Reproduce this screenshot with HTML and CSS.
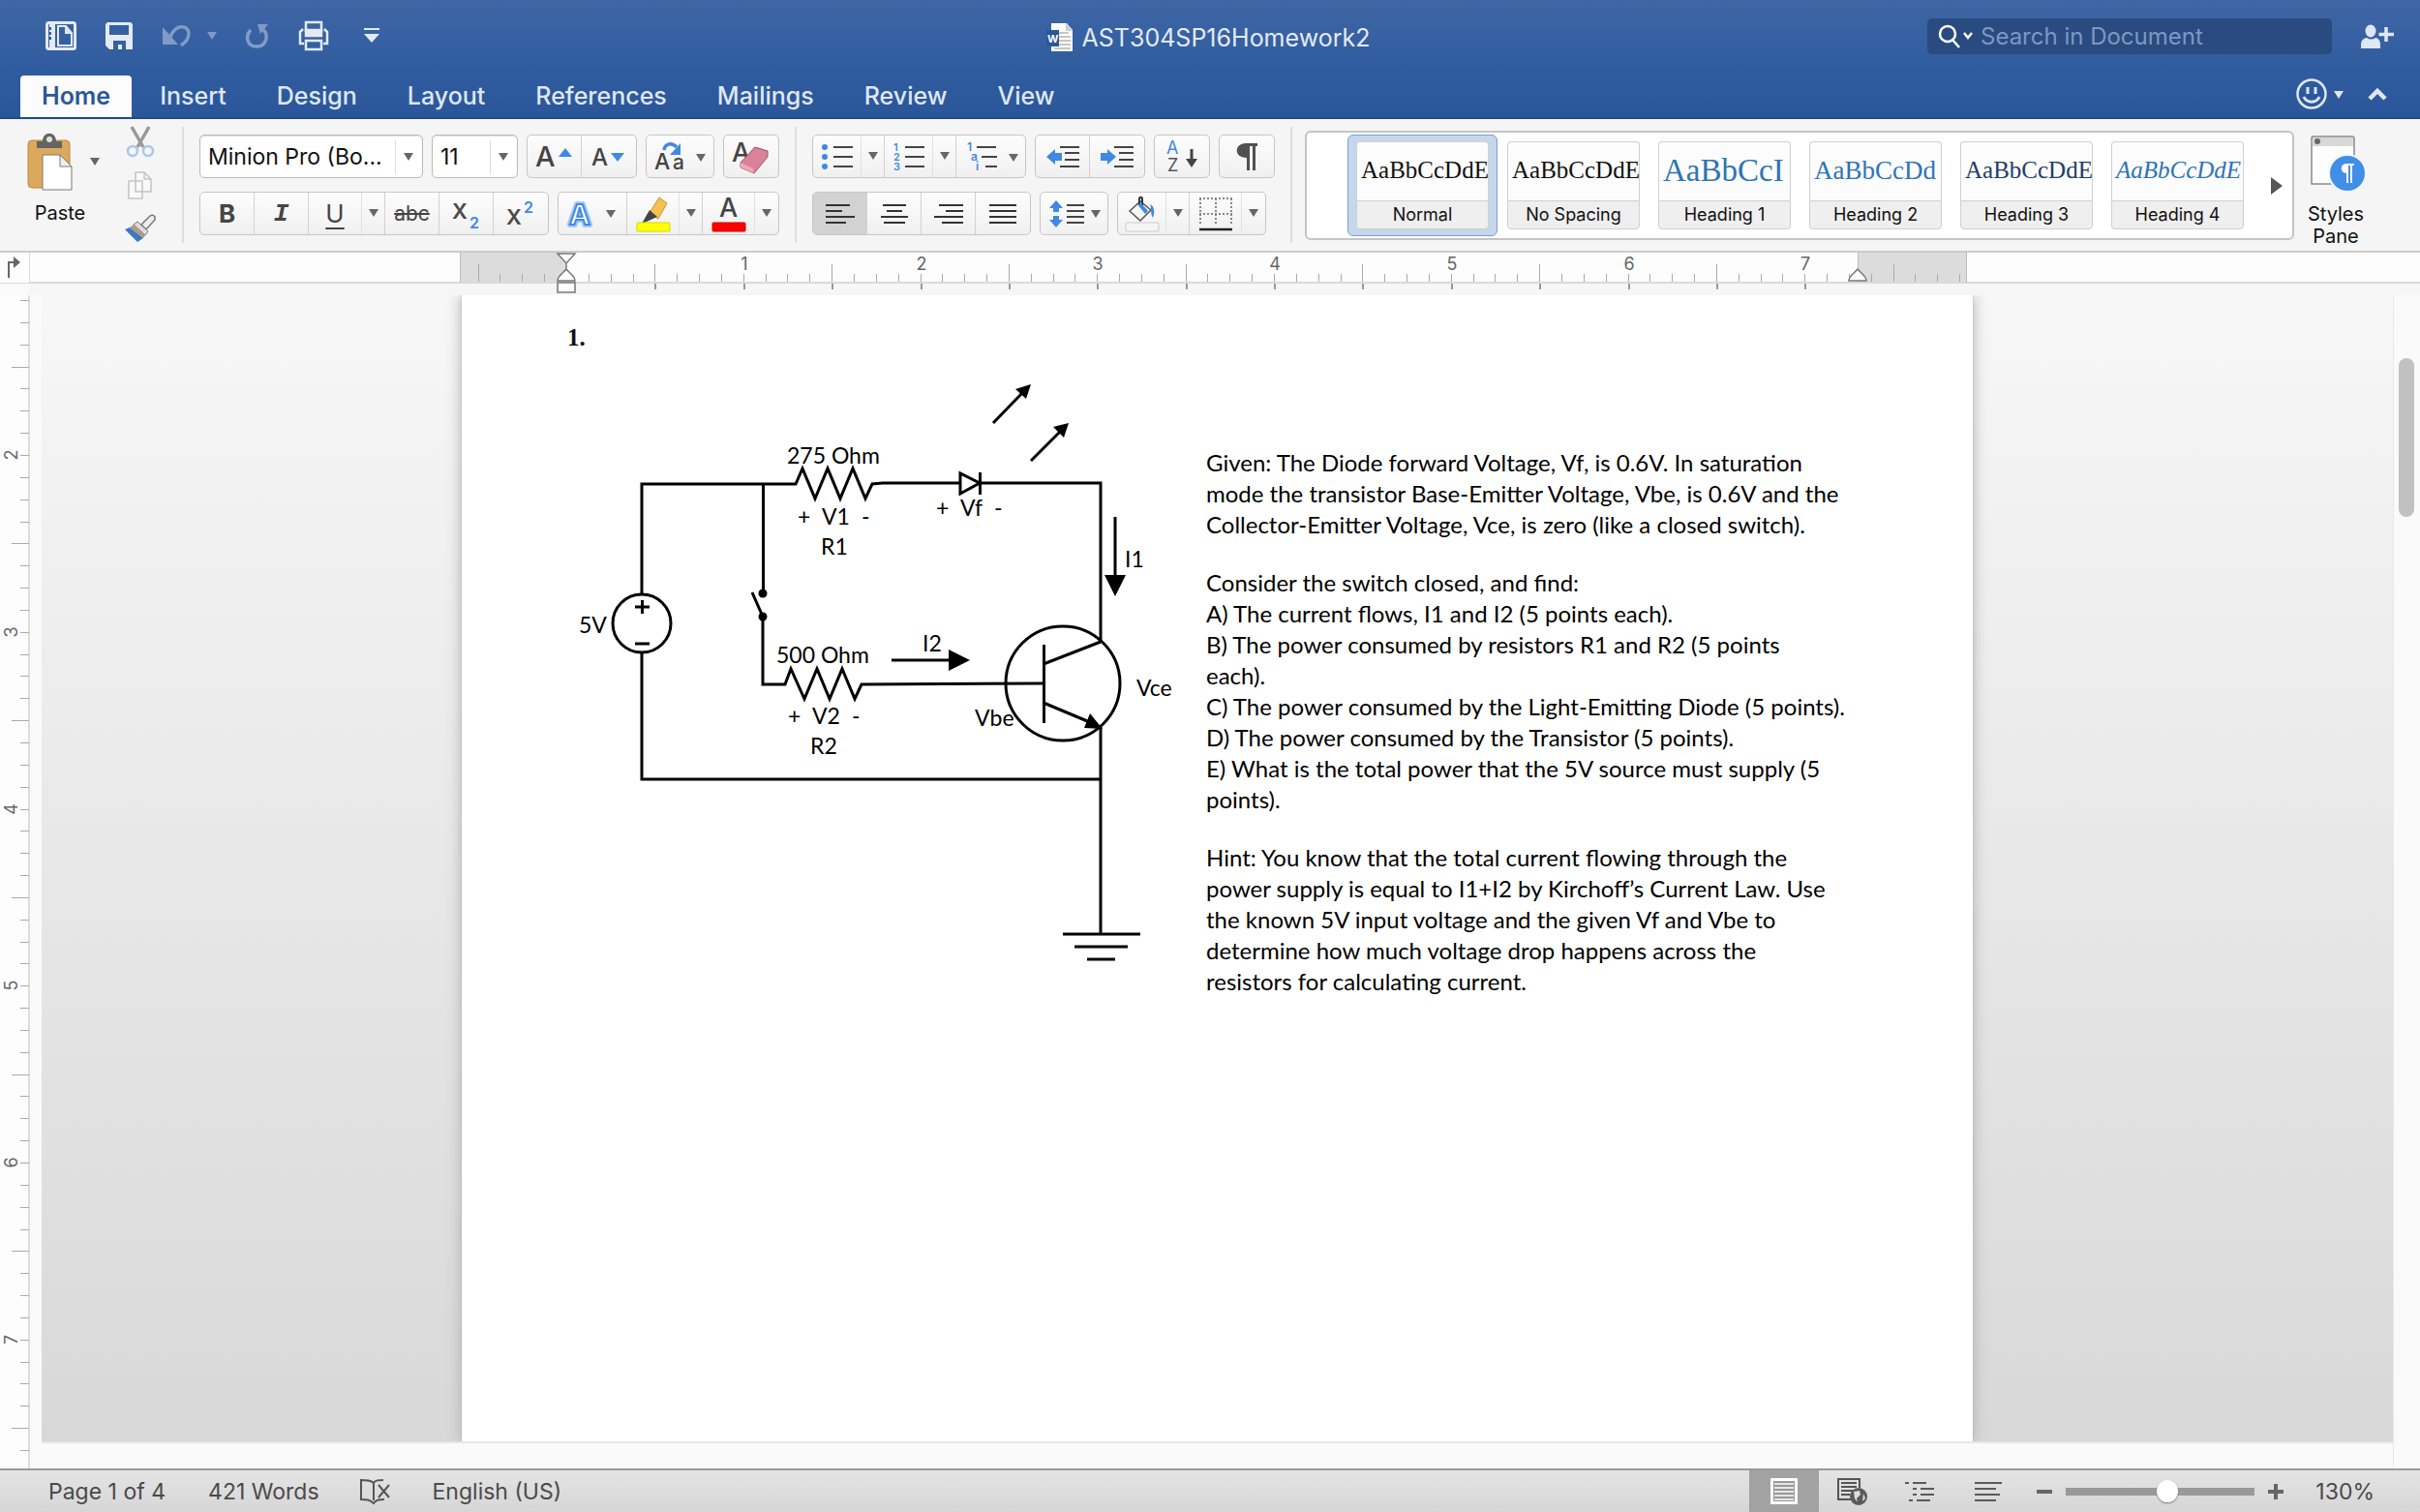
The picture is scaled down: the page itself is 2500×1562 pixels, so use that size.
FILE: index.html
```html
<!DOCTYPE html>
<html lang="en">
<head>
<meta charset="utf-8">
<title>AST304SP16Homework2</title>
<link rel="stylesheet" href="styles.css">
</head>
<body>
<header class="titlebar">
  <div class="title-row">
    <div class="quick">
      <button aria-label="Sidebar"><svg width="32" height="30"><rect x="1.500" y="1.500" width="29" height="27" rx="2" fill="none" stroke="#e3eaf4" stroke-width="3"/><path d="M7 2v26" stroke="#e3eaf4" stroke-width="6"/><path d="M5 6v3M5 11v3M5 16v3" stroke="#3560a0" stroke-width="2"/><path d="M13 5h8l6 7v13H13z" fill="none" stroke="#e3eaf4" stroke-width="2"/><path d="M20 5v8h7z" fill="#e3eaf4"/></svg></button>
      <button aria-label="Save"><svg width="30" height="30"><path d="M3 1h24l2 2v26H5l-4-4V3z" fill="#e3eaf4"/><path d="M5 4h20v10H5zM9 20h13v9h-4v-5h-4v5H9z" fill="#3560a0"/></svg></button>
      <button aria-label="Undo"><svg width="31" height="28"><path d="M9 15C14 2 27 2 28 11c0 7-4 10-8 13" fill="none" stroke="#7f9cc8" stroke-width="3.500"/><path d="M1 5v18h16z" fill="#7f9cc8"/></svg></button>
      <button aria-label="Undo history"><svg width="10" height="9"><path d="M0 0h10l-5 8z" fill="#7f9cc8"/></svg></button>
      <button aria-label="Redo"><svg width="26" height="28"><path d="M6 8C0 14 2 25 12 25c11 0 13-13 6-18" fill="none" stroke="#7f9cc8" stroke-width="3.500"/><path d="M13 2h11l-8 10z" fill="#7f9cc8"/></svg></button>
      <button aria-label="Print"><svg width="32" height="32"><path d="M8 12V2h16v10" fill="none" stroke="#e3eaf4" stroke-width="2.500"/><path d="M8 10h16v6H8zM6 24H2V12l3-3M26 24h4V12l-3-3" fill="none" stroke="#e3eaf4" stroke-width="2.500"/><path d="M7 9h18v7H7z" fill="#e3eaf4"/><path d="M8 21h16v9H8z" fill="none" stroke="#e3eaf4" stroke-width="2.500"/></svg></button>
      <button aria-label="Customize toolbar"><svg width="16" height="16"><path d="M0 0h16v2H0zM0 6h16l-8 9z" fill="#e3eaf4"/></svg></button>
    </div>
    <h1 class="doc-title"><svg width="28" height="30"><path d="M5 0h16l6 7v22H5z" fill="#fff"/><path d="M20 0v8h7z" fill="#c7cbd2"/><path d="M13 10h10M13 14h12M13 18h12M13 22h12M8 26h17" stroke="#8d8d8d" stroke-width="1"/><rect y="7" width="13" height="17" fill="#2b5797"/><text x="1" y="20" font-size="11" font-weight="700" fill="#fff">W</text></svg>AST304SP16Homework2</h1>
    <div class="title-end">
      <label class="search"><svg width="38" height="26"><circle cx="10" cy="10" r="8" fill="none" stroke="#fff" stroke-width="2.500"/><path d="M15 16l7 8" stroke="#fff" stroke-width="2.500"/><path d="M27 9l4 5 4-5" fill="none" stroke="#fff" stroke-width="2.500"/></svg><input type="search" placeholder="Search in Document" aria-label="Search in Document"></label>
      <button aria-label="Share"><svg width="34" height="26"><ellipse cx="10" cy="7" rx="5.500" ry="6.500" fill="#dfe7f2"/><path d="M0 25v-4c0-5 4-7 6-7 3 2 6 2 9 0 2 0 5 2 5 7v4z" fill="#dfe7f2"/><path d="M26 3v15M18.500 10.500H34" stroke="#dfe7f2" stroke-width="3.500"/></svg></button>
    </div>
  </div>
  <nav class="tabs">
    <a class="active" href="#home">Home</a><a href="#insert">Insert</a><a href="#design">Design</a><a href="#layout">Layout</a><a href="#references">References</a><a href="#mailings">Mailings</a><a href="#review">Review</a><a href="#view">View</a>
    <div class="tabs-end">
      <button aria-label="Feedback"><svg width="50" height="34"><circle cx="17" cy="17" r="14.500" fill="none" stroke="#dfe7f2" stroke-width="2.500"/><path d="M13 10v7M21 10v7" stroke="#dfe7f2" stroke-width="3"/><path d="M9 20c3 7 13 7 16 0" fill="none" stroke="#dfe7f2" stroke-width="3"/><path d="M40 14h10l-5 8z" fill="#dfe7f2"/></svg></button>
      <button aria-label="Collapse ribbon"><svg width="22" height="14"><path d="M3 12l8-8 8 8" fill="none" stroke="#dfe7f2" stroke-width="4.500"/></svg></button>
    </div>
  </nav>
</header>

<section class="ribbon" id="home" aria-label="Home">
  <div class="clipboard">
    <button class="big"><svg width="46" height="60"><rect x="0" y="8" width="43" height="49" rx="4" fill="#dca95c" stroke="#b98a45"/><path d="M9 16V9h6c0-11 14-11 14 0h6v7z" fill="#646464"/><circle cx="22" cy="7" r="3" fill="#e0e0e0"/><path d="M15 23h18l12 12v24H15z" fill="#fff" stroke="#777"/><path d="M33 23v12h12z" fill="#eee" stroke="#777"/></svg>Paste</button>
    <button class="paste-more" aria-label="Paste options"><svg width="10" height="9"><path d="M0 0h10l-5 8z" fill="#666"/></svg></button>
    <div class="clip-tools">
      <button aria-label="Cut"><svg width="28" height="32"><path d="M5 0l12 21M23 0L11 21" stroke="#999" stroke-width="3.500"/><circle cx="6" cy="25" r="5" fill="none" stroke="#a8c8e6" stroke-width="2.500"/><circle cx="22" cy="25" r="5" fill="none" stroke="#a8c8e6" stroke-width="2.500"/></svg></button>
      <button aria-label="Copy"><svg width="28" height="32"><path d="M2 11h14v18H2zM9 2h9l7 7v13H9zM18 2v7h7" fill="#f9f9f9" stroke="#c4c4c4" stroke-width="1.500"/></svg></button>
      <button aria-label="Format painter"><svg width="32" height="30"><path d="M17 11l9-9q3-2 5 1v3l-9 10z" fill="#eee" stroke="#777" stroke-width="1.500"/><path d="M13 8l11 10-3 4L9 11z" fill="#ddd" stroke="#777"/><path d="M9 11l12 11-2 3L5 14z" fill="#b39a83"/><path d="M5 14l14 11-6 4L0 16z" fill="#3d7abf"/></svg></button>
    </div>
  </div>
  <i class="sep"></i>
  <div class="rows">
    <div class="row">
      <span class="combo font"><select aria-label="Font"><option>Minion Pro (Bo...</option></select></span>
      <span class="combo size"><select aria-label="Font size"><option>11</option></select></span>
      <div class="group"><button aria-label="Grow font"><svg width="40" height="32"><text x="0" y="26" font-size="29" font-weight="500" fill="#444">A</text><path d="M24 16h14l-7-9z" fill="#3f8ae0"/></svg></button><button aria-label="Shrink font"><svg width="36" height="32"><text x="0" y="25" font-size="24" font-weight="500" fill="#444">A</text><path d="M20 12h14l-7 9z" fill="#3f8ae0"/></svg></button></div>
      <div class="group solo wide"><button aria-label="Change case"><svg width="54" height="34"><text x="0" y="30" font-size="23" font-weight="500" fill="#444">A</text><text x="19" y="30" font-size="21" font-weight="500" fill="#444">a</text><path d="M10 10C11 3 18 2 23 7" fill="none" stroke="#3f8ae0" stroke-width="3.500"/><path d="M27 3v12H16z" fill="#3f8ae0"/><path d="M43 14h10l-5 8z" fill="#666"/></svg></button></div>
      <div class="group solo"><button aria-label="Clear formatting"><svg width="40" height="38"><text x="0" y="24" font-size="27" font-weight="500" fill="#444">A</text><path d="M24 9l13 4v6L23 36l-14-6v-5z" fill="#d9829a" stroke="#9c4d62"/><path d="M9 25l13 6 1 5-14-6z" fill="#f0a5b8"/></svg></button></div>
    </div>
    <div class="row">
      <div class="group">
        <button class="b">B</button><button class="i">I</button><button class="u split">U</button><button class="more" aria-label="Underline style"><svg width="10" height="9"><path d="M0 0h10l-5 8z" fill="#666"/></svg></button><button class="s">abc</button><button class="x" aria-label="Subscript"><svg width="34" height="34"><text x="2" y="22" font-size="22" font-weight="600" fill="#4a4a4a">X</text><text x="20" y="32" font-size="16" font-weight="600" fill="#3f8ae0">2</text></svg></button><button class="x" aria-label="Superscript"><svg width="34" height="34"><text x="2" y="28" font-size="22" font-weight="600" fill="#4a4a4a">X</text><text x="20" y="16" font-size="16" font-weight="600" fill="#3f8ae0">2</text></svg></button>
      </div>
      <div class="group effects">
        <button class="fx" aria-label="Text effects"><svg width="54" height="34"><text x="3" y="28" font-size="29" font-weight="700" fill="#fff" stroke="#a5c9f3" stroke-width="6" stroke-linejoin="round">A</text><text x="3" y="28" font-size="29" font-weight="700" fill="#fff" stroke="#3f8ae0" stroke-width="2">A</text><path d="M41 13h10l-5 8z" fill="#666"/></svg></button><button class="split" aria-label="Highlight"><svg width="36" height="38"><path d="M24 2l8 6-9 16-9-6z" fill="#f5c24f" stroke="#c79332"/><path d="M14 15l8 7-11 5-5 2z" fill="#444"/><rect x="1" y="28" width="34" height="9" rx="1" fill="#ff0" stroke="#d8d800"/></svg></button><button class="more" aria-label="Highlight colour"><svg width="10" height="9"><path d="M0 0h10l-5 8z" fill="#666"/></svg></button><button class="split" aria-label="Font colour"><svg width="36" height="38"><text x="8" y="22" font-size="27" font-weight="500" fill="#444">A</text><rect x="1" y="28" width="34" height="9" rx="1" fill="#f00" stroke="#d00000"/></svg></button><button class="more" aria-label="More font colours"><svg width="10" height="9"><path d="M0 0h10l-5 8z" fill="#666"/></svg></button>
      </div>
    </div>
  </div>
  <i class="sep"></i>
  <div class="rows">
    <div class="row">
      <div class="group">
        <button class="split lists" aria-label="Bullets"><svg width="34" height="32"><path d="M13 6h20M13 16h20M13 26h20" stroke="#444" stroke-width="2"/><circle cx="4" cy="6" r="3" fill="#3f8ae0"/><circle cx="4" cy="16" r="3" fill="#3f8ae0"/><circle cx="4" cy="26" r="3" fill="#3f8ae0"/></svg></button><button class="more" aria-label="Bullet style"><svg width="10" height="9"><path d="M0 0h10l-5 8z" fill="#666"/></svg></button><button class="split" aria-label="Numbering"><svg width="34" height="32"><path d="M13 6h20M13 16h20M13 26h20" stroke="#444" stroke-width="2"/><g font-size="11" font-weight="600" fill="#3f8ae0"><text x="1" y="10">1</text><text x="1" y="20">2</text><text x="1" y="30">3</text></g></svg></button><button class="more" aria-label="Number style"><svg width="10" height="9"><path d="M0 0h10l-5 8z" fill="#666"/></svg></button><button class="multi" aria-label="Multilevel list"><svg width="54" height="32"><path d="M12 6h20M17 16h16M21 26h12" stroke="#444" stroke-width="2"/><g font-size="12" font-weight="600" fill="#3f8ae0"><text x="2" y="10">1</text><text x="6" y="20">a</text><text x="11" y="30">i</text></g><path d="M45 13h10l-5 8z" fill="#666"/></svg></button>
      </div>
      <div class="group"><button aria-label="Decrease indent"><svg width="36" height="32"><path d="M15 6h20M20 12h15M20 19h15M15 26h20" stroke="#444" stroke-width="2"/><path d="M1 16l9-8v4h7v8h-7v4z" fill="#3f8ae0"/></svg></button><button aria-label="Increase indent"><svg width="36" height="32"><path d="M15 6h20M20 12h15M20 19h15M15 26h20" stroke="#444" stroke-width="2"/><path d="M17 16l-9-8v4H1v8h7v4z" fill="#3f8ae0"/></svg></button></div>
      <div class="group solo"><button aria-label="Sort"><svg width="34" height="36"><text x="1" y="15" font-size="18" fill="#3f8ae0">A</text><text x="2" y="33" font-size="18" fill="#555">Z</text><path d="M27 10v14" stroke="#444" stroke-width="3"/><path d="M21 20h12l-6 9z" fill="#444"/></svg></button></div>
      <div class="group solo"><button aria-label="Show marks"><svg width="24" height="30"><path d="M11 1h12v3h-2v25h-3V4h-3v25h-3V16C-2 16-1 1 11 1z" fill="#505050"/></svg></button></div>
    </div>
    <div class="row">
      <div class="group"><button class="on" aria-label="Align left"><svg width="30" height="24"><path d="M0 3h25M0 9h17M0 15h30M0 21h21" stroke="#333" stroke-width="2"/></svg></button><button aria-label="Centre"><svg width="28" height="24"><path d="M2 3h24M6 9h16M0 15h28M3 21h22" stroke="#333" stroke-width="2"/></svg></button><button aria-label="Align right"><svg width="30" height="24"><path d="M5 3h25M12 9h18M0 15h30M8 21h22" stroke="#333" stroke-width="2"/></svg></button><button aria-label="Justify"><svg width="28" height="24"><path d="M0 3h28M0 9h28M0 15h28M0 21h28" stroke="#333" stroke-width="2"/></svg></button></div>
      <div class="group solo wide"><button aria-label="Line spacing"><svg width="54" height="32"><path d="M19 7h18M19 13h18M19 19h18M19 25h18" stroke="#444" stroke-width="2"/><path d="M8 2l7 8h-4v4H5v-4H1zM8 30l7-8h-4v-4H5v4H1z" fill="#3f8ae0"/><path d="M44 12h10l-5 8z" fill="#666"/></svg></button></div>
      <div class="group"><button class="split" aria-label="Shading"><svg width="36" height="40"><path d="M5 17L16 7l11 9-11 11z" fill="#f5f5f5" stroke="#555" stroke-width="1.500"/><path d="M18 13V5c0-3-3-3-3 0v5" fill="none" stroke="#333" stroke-width="2"/><path d="M13 10l8 10 3-3-7-8zM26 10c5 2 5 9 3 14-3-5-1-9-3-14z" fill="#3f8ae0"/><rect x="1" y="29" width="34" height="9" rx="1" fill="#f5f5f5" stroke="#ccc"/></svg></button><button class="more" aria-label="Shading colour"><svg width="10" height="9"><path d="M0 0h10l-5 8z" fill="#666"/></svg></button><button class="border-pick" aria-label="Borders"><svg width="36" height="36"><path d="M1 2h34M1 18h34M2 2v28M18 2v28M34 2v28" stroke="#888" stroke-width="2" stroke-dasharray="2 2"/><path d="M1 34h34" stroke="#222" stroke-width="2.500"/></svg></button><button class="more" aria-label="Border style"><svg width="10" height="9"><path d="M0 0h10l-5 8z" fill="#666"/></svg></button></div>
    </div>
  </div>
  <i class="sep"></i>
  <div class="gallery">
    <div class="tiles">
      <button class="tile normal selected"><span class="preview">AaBbCcDdE</span><span class="name">Normal</span></button>
      <button class="tile normal"><span class="preview">AaBbCcDdE</span><span class="name">No Spacing</span></button>
      <button class="tile h1"><span class="preview">AaBbCcI</span><span class="name">Heading 1</span></button>
      <button class="tile h2"><span class="preview">AaBbCcDd</span><span class="name">Heading 2</span></button>
      <button class="tile h3"><span class="preview">AaBbCcDdE</span><span class="name">Heading 3</span></button>
      <button class="tile h4"><span class="preview">AaBbCcDdE</span><span class="name">Heading 4</span></button>
    </div>
    <button class="next" aria-label="More styles"><svg width="12" height="18"><path d="M0 0l12 9-12 9z" fill="#555"/></svg></button>
  </div>
  <button class="big pane"><svg width="58" height="60"><path d="M1 3q0-2 2-2h40q2 0 2 2v47H1z" fill="#fdfdfd" stroke="#8a8a8a" stroke-width="1.500"/><path d="M2 2h42v9H2z" fill="#d8d8d8"/><circle cx="7" cy="6" r="3" fill="#666"/><circle cx="38" cy="39" r="20" fill="#f5f5f5"/><circle cx="38" cy="39" r="18" fill="#3f8ee8"/><path d="M37 29h8v2h-2v18h-2V31h-2v18h-2V39c-7 0-7-10 0-10z" fill="#fff"/></svg>Styles<br>Pane</button>
</section>

<main class="workspace">
  <div class="corner"><svg width="16" height="24"><path d="M3 23V7h7" fill="none" stroke="#666" stroke-width="2"/><path d="M8 1l7 6-7 6z" fill="#666"/></svg></div>
  <div class="hruler"><svg id="hruler" width="1560" height="44" aria-label="Horizontal ruler"></svg></div>
  <div class="vruler"><svg id="vruler" width="30" height="1212" aria-label="Vertical ruler"></svg></div>
  <div class="canvas">
    <article class="page">
      <p class="number">1.</p>
      <div class="problem">
        <svg class="circuit" width="644" height="640" viewBox="586 365 644 640">
          <g fill="none" stroke="#000" stroke-width="3" stroke-linejoin="miter">
            <path d="M663 614V500H822L829 484L842 515L855 484L868 515L881 484L894 515L901 500L912 499H1137V663"/>
            <path d="M992 489V510L1012 499ZM1012.500 488V511" fill="#fff"/>
            <path d="M788.500 500V613M777 612L788 637V707H811L817 691L831 722L844 691L857 722L870 691L883 722L890 707L1078 706"/>
            <path d="M1078.500 666V747M1078 686L1137 663M1078 726L1128 747M1137 750V965M663 674V805H1137"/>
            <circle cx="663" cy="644" r="30"/><circle cx="1098" cy="706" r="59"/>
            <path d="M656 627H671M663.500 620V634M656 665H671M1098 965H1178M1110 978H1165M1123 991H1152"/>
            <path d="M1026 437L1056 406M1065 476L1096 445M1152 534V596M921 682H982"/>
          </g>
          <path d="M1065 397l-5 15-11-10zM1104 437l-5 15-11-11zM1141 594h22l-11 22zM980 671v22l22-11zM1120 752l6-15 13 16z"/>
          <circle cx="788" cy="613" r="4.500"/><circle cx="788" cy="637" r="4.500"/>
          <g class="labels">
            <text x="813" y="479">275 Ohm</text><text x="824" y="542">+</text><text x="849" y="542">V1</text><text x="890" y="542">-</text><text x="848" y="573">R1</text>
            <text x="967" y="533">+</text><text x="992" y="533">Vf</text><text x="1027" y="533">-</text><text x="1162" y="586">I1</text><text x="598" y="654">5V</text>
            <text x="802" y="685">500 Ohm</text><text x="953" y="673">I2</text><text x="814" y="748">+</text><text x="839" y="748">V2</text><text x="880" y="748">-</text><text x="837" y="779">R2</text>
            <text x="1007" y="750">Vbe</text><text x="1174" y="719">Vce</text>
          </g>
        </svg>
        <div class="prose">
          <p>Given: The Diode forward Voltage, Vf, is 0.6V. In saturation<br>mode the transistor Base-Emitter Voltage, Vbe, is 0.6V and the<br>Collector-Emitter Voltage, Vce, is zero (like a closed switch).</p>
          <p>Consider the switch closed, and find:<br>A) The current flows, I1 and I2 (5 points each).<br>B) The power consumed by resistors R1 and R2 (5 points<br>each).<br>C) The power consumed by the Light-Emitting Diode (5 points).<br>D) The power consumed by the Transistor (5 points).<br>E) What is the total power that the 5V source must supply (5<br>points).</p>
          <p>Hint: You know that the total current flowing through the<br>power supply is equal to I1+I2 by Kirchoff’s Current Law. Use<br>the known 5V input voltage and the given Vf and Vbe to<br>determine how much voltage drop happens across the<br>resistors for calculating current.</p>
        </div>
      </div>
    </article>
  </div>
  <div class="scroll"><div class="thumb"></div></div>
</main>

<footer class="status">
  <span>Page 1 of 4</span><span>421 Words</span>
  <button aria-label="Proofing"><svg width="34" height="28"><path d="M15 23V5C12 2 8 2 2 2v20c5 0 9 0 13 4 3-4 6-4 11-4M15 5c2-3 5-3 10-3" fill="none" stroke="#555" stroke-width="2"/><path d="M20 7l11 13M31 7L20 20" stroke="#555" stroke-width="2"/></svg></button>
  <span>English (US)</span>
  <div class="views">
    <button class="on" aria-label="Print layout"><svg width="28" height="28"><rect x="1.500" y="1.500" width="25" height="24" fill="none" stroke="#fff" stroke-width="3"/><rect x="3" y="3" width="22" height="21" fill="#999"/><path d="M4 6h20M4 10h20M4 14h20M4 18h20M4 22h20" stroke="#fff" stroke-width="1.500"/></svg></button>
    <button aria-label="Web layout"><svg width="34" height="30"><path d="M15 23H2V2h22v9" fill="none" stroke="#555" stroke-width="2"/><path d="M5 6h16M5 10h16M5 14h12M5 18h9" stroke="#555" stroke-width="2"/><circle cx="23" cy="20" r="9" fill="#5a5a5a"/><path d="M18 15l6-1 1 4-4 4 1 4-3-4zM28 17l2 5-3 3z" fill="#ddd"/></svg></button>
    <button aria-label="Outline"><svg width="32" height="26"><path d="M0 4h4M8 4h14M8 10h4M16 10h14M8 16h4M16 16h14M4 22h4M12 22h14" stroke="#5a5a5a" stroke-width="2"/></svg></button>
    <button aria-label="Draft"><svg width="30" height="26"><path d="M1 4h28M1 10h22M1 16h26M1 22h22" stroke="#5a5a5a" stroke-width="2"/></svg></button>
  </div>
  <div class="zoom">
    <button aria-label="Zoom out"><svg width="16" height="16"><path d="M0 8h16" stroke="#666" stroke-width="4"/></svg></button>
    <input type="range" min="0" max="100" value="54" aria-label="Zoom">
    <button aria-label="Zoom in"><svg width="16" height="16"><path d="M0 8h16M8 0v16" stroke="#666" stroke-width="4"/></svg></button>
    <span>130%</span>
  </div>
</footer>
<script src="rulers.js"></script>
</body>
</html>
```
FILE: styles.css
```css
* { box-sizing: border-box; }
body { margin: 0; min-height: 100vh; display: flex; flex-direction: column; font-family: Inter, "Liberation Sans", sans-serif; background: #fafafa; color: #111; }
button { border: 0; background: none; padding: 0; margin: 0; font: inherit; color: inherit; display: flex; align-items: center; justify-content: center; flex: none; }
svg { display: block; flex: none; overflow: visible; }
p, h1 { margin: 0; }

.titlebar { background: linear-gradient(#3f66a5, #2f5c9f 60%, #2b579a); border-bottom: 2px solid #234a86; color: #e3eaf4; height: 123px; display: flex; flex-direction: column; }
.title-row { display: grid; grid-template-columns: 1fr auto 1fr; height: 80px; padding: 0 27px 0 23px; }
.quick { display: flex; align-items: center; height: 74px; padding-left: 24px; }
.quick button + button { margin-left: 29px; }
.quick button:nth-child(4) { margin-left: 16px; }
.quick button:nth-child(7) { margin-left: 36px; }
.doc-title { display: flex; align-items: center; gap: 9px; height: 78px; font-size: 25px; font-weight: 400; }
.title-end { display: flex; align-items: center; justify-content: flex-end; height: 75px; gap: 30px; }
.search { display: flex; align-items: center; width: 418px; height: 37px; padding: 0 8px 0 11px; gap: 6px; border-radius: 5px; background: #2a4b7f; }
.search input { flex: 1; min-width: 0; border: 0; padding: 0; background: none; font: 24px Inter, sans-serif; color: #fff; outline: 0; }
.search input::placeholder { color: #7d98c3; opacity: 1; }
.tabs { display: flex; height: 43px; padding: 0 33px 0 21px; }
.tabs a { height: 43px; padding: 0 26px; line-height: 43px; font-size: 25px; font-weight: 500; color: #dfe7f2; text-decoration: none; }
.tabs a.active { margin-right: 3px; padding: 0 22px; border-radius: 4px 4px 0 0; background: #fcfcfc; color: #2b579a; font-weight: 600; }
.tabs-end { margin-left: auto; display: flex; align-items: center; gap: 24px; height: 38px; }

.ribbon { display: flex; height: 138px; padding: 8px 54px 0 26px; background: #f5f5f5; border-bottom: 2px solid #ccc; }
.sep { width: 2px; height: 120px; background: #dedede; flex: none; }
.clipboard { display: flex; width: 162px; flex: none; }
.big { flex-direction: column; font-size: 20px; line-height: 23px; justify-content: flex-start; gap: 16px; }
.clipboard .big { width: 72px; padding-top: 6px; gap: 12px; }
.clipboard .big svg { margin-right: 20px; }
.paste-more { height: 72px; margin: 0 0 0 -5px; }
.clip-tools { display: flex; flex-direction: column; gap: 13px; margin-left: 26px; align-items: center; width: 32px; }
.rows { display: flex; flex-direction: column; gap: 14px; padding: 8px 16px 0; flex: none; }
.row { display: flex; gap: 9px; }
.combo { position: relative; height: 45px; border: 1px solid #bbb; border-radius: 5px; background: #fff; box-shadow: inset 0 1px 1px #ddd; }
.combo::before { content: ""; position: absolute; right: 27px; top: 5px; height: 35px; border-left: 1px solid #ddd; }
.combo::after { content: ""; position: absolute; right: 9px; top: 18px; border: 5px solid transparent; border-top: 8px solid #666; border-bottom: 0; }
.combo select { appearance: none; width: 100%; height: 43px; padding: 0 30px 0 8px; border: 0; background: none; font: 23px Inter, sans-serif; color: #111; }
.combo.font { width: 231px; }
.combo.size { width: 89px; }
.group { display: flex; height: 45px; border: 1px solid #c6c6c6; border-radius: 5px; background: linear-gradient(#fdfdfd, #f0f0f0); overflow: hidden; flex: none; }
.group button { width: 56px; border-right: 1px solid #d2d2d2; color: #444; font-size: 26px; }
.group button:last-child { border-right: 0; }
.group.wide button { width: 69px; }
.group .split { width: 50px; border-right-color: #e2e2e2; }
.group .border-pick { width: 54px; border-right-color: #e2e2e2; }
.group .more { width: 24px; }
.group .multi { width: 71px; }
.group .on { background: #d2d2d2; }
.group .b { font-weight: 700; }
.group .i { font-family: "Liberation Mono", monospace; font-style: italic; font-weight: 700; }
.group .u { width: 55px; text-decoration: underline; text-underline-offset: 5px; }
.group .s { font-size: 21px; text-decoration: line-through; }
.effects .fx { width: 71px; }
.effects .split { width: 54px; }
.gallery { display: flex; flex: 1; min-width: 0; height: 113px; margin: 4px 10px 0 13px; border: 2px solid #c4c4c4; border-radius: 6px; background: #fff; justify-content: space-between; }
.tiles { display: flex; gap: 1px; padding: 2px 0 0 42px; overflow: hidden; }
.tile { width: 155px; height: 105px; padding: 6px 8px; flex-direction: column; align-items: stretch; border: 1px solid transparent; border-radius: 6px; }
.tile.selected { background: #c6d6eb; border-color: #7a9fd2; }
.preview, .name { border: 1px solid #d0d0d0; background: #fcfcfc; }
.preview { height: 61px; border-bottom: 0; border-radius: 4px 4px 0 0; padding-left: 4px; text-align: left; font: 25px/60px "Liberation Serif", serif; white-space: nowrap; }
.name { height: 30px; border-radius: 0 0 4px 4px; background: #efefef; font-size: 18px; line-height: 28px; }
.tile .preview { line-height: 58px; }
.h1 .preview { font-size: 33px; color: #2e74b5; }
.h2 .preview { font-size: 27px; color: #2e74b5; }
.h3 .preview { color: #1f3d6b; }
.h4 .preview { font-style: italic; color: #2e74b5; }
.next { margin-right: 10px; }
.pane { width: 66px; padding-top: 9px; gap: 10px; }
.pane svg { margin-left: 6px; }

.workspace { flex: 1; display: grid; grid-template-columns: 31px 1fr 28px; grid-template-rows: 44px 1fr; }
.corner { border-right: 1px solid #ddd; border-bottom: 1px solid #ddd; height: 32px; padding: 3px 0 0 6px; background: #fdfdfd; }
.hruler { grid-column: 2 / 4; display: flex; justify-content: center; padding-right: 21px; background: linear-gradient(#fdfdfd 30px, #dadada 30px, #dadada 32px, #f6f6f6 32px); }
.vruler { border-right: 2px solid #ddd; background: #fdfdfd; }
.canvas { display: flex; justify-content: center; margin: 0 0 26px 12px; background: linear-gradient(#f7f7f7, #d8d8d8); border-bottom: 2px solid #e6e6e6; overflow: hidden; }
.page { width: 100%; max-width: 1561px; padding: 28px 20px 0 109px; background: #fff; box-shadow: 0 0 14px #aaa, 0 0 1px #999; }
.number { font: 700 25px/32px "Liberation Serif", serif; }
.problem { display: flex; gap: 16px; }
.circuit, .prose { font-family: Lato, sans-serif; }
.circuit text { font-size: 23px; }
.prose { padding-top: 97px; font-size: 24px; line-height: 32px; white-space: nowrap; color: #000; }
.prose p + p { margin-top: 28px; }
.scroll { border-left: 1px solid #e8e8e8; background: #fafafa; padding: 65px 6px 0 5px; }
.thumb { height: 164px; border-radius: 8px; background: #c1c1c1; }
svg .num { font-size: 18px; fill: #666; text-anchor: middle; }

.status { display: flex; align-items: center; height: 45px; padding-left: 50px; border-top: 2px solid #9a9a9a; background: linear-gradient(#e4e4e4, #d6d6d6); font-size: 23px; color: #4a4a4a; }
.status > span { margin-right: 44px; }
.status > button { margin: 0 42px 0 -3px; }
.views { display: flex; margin-left: auto; height: 43px; }
.views button { width: 70px; }
.views .on { background: #a2a2a2; width: 72px; }
.zoom { display: flex; align-items: center; gap: 14px; margin-left: 15px; padding-right: 47px; }
.zoom span { margin-left: 19px; }
.zoom input { appearance: none; width: 195px; height: 24px; margin: 0; background: linear-gradient(#999, #999) center / 100% 8px no-repeat; border-radius: 4px; }
.zoom input::-webkit-slider-thumb { appearance: none; width: 22px; height: 23px; border-radius: 50%; background: #fff; box-shadow: 0 1px 2px #777; }
```
FILE: rulers.js
```js
const NS = "http://www.w3.org/2000/svg";
const INCH = 182.75;

function add(parent, name, attrs, text) {
  const el = document.createElementNS(NS, name);
  for (const key in attrs) el.setAttribute(key, attrs[key]);
  if (text !== undefined) el.textContent = text;
  parent.appendChild(el);
}

// Horizontal ruler: zero is the left margin, 110px in from the page edge.
const h = document.getElementById("hruler");
add(h, "rect", { x: 0, y: 0, width: 110, height: 30, fill: "#dcdcdc" });
add(h, "rect", { x: 1444, y: 0, width: 112, height: 30, fill: "#dcdcdc" });
add(h, "path", { d: "M0.5 0V31M1556.5 0V31M1444.5 0V31", stroke: "#bbb" });
for (let i = -6; i <= 63; i++) {
  const x = Math.round(110 + i * INCH / 8);
  if (x > 1555 || x < 10 || i === 0) continue;
  const half = Math.abs(i % 8) === 4;
  const top = half ? 12 : 22;
  add(h, "rect", { x, y: top, width: 1, height: 30 - top, fill: "#aaa" });
  if (i > 0 && i < 58 && i % 4 === 0) {
    add(h, "rect", { x, y: 32, width: 2, height: 6, fill: "#999" });
  }
  if (i > 0 && i % 8 === 0) add(h, "text", { x: x + 1, y: 18, class: "num" }, i / 8);
}
const marker = { fill: "#fff", stroke: "#777", "stroke-width": 1.5 };
add(h, "path", { d: "M101 1H119L110 11ZM110 11V17M110 17C113 21 119 24 119 29H101C101 24 107 21 110 17ZM101 31H119V41H101Z", ...marker });
add(h, "path", { d: "M1444 17C1447 21 1453 24 1453 29H1435C1435 24 1441 21 1444 17Z", ...marker });

// Vertical ruler: the inch-2 mark lies 165px below the top of the canvas.
const v = document.getElementById("vruler");
for (let i = -7; i <= 45; i++) {
  const y = Math.round(165 + i * INCH / 8);
  if (y < 0) continue;
  const half = Math.abs(i % 8) === 4;
  add(v, "rect", { x: half ? 12 : 21, y, width: half ? 18 : 9, height: 1, fill: "#aaa" });
  if (i % 8 === 0) add(v, "text", { x: 0, y: 0, transform: `translate(18 ${y}) rotate(-90)`, class: "num" }, 2 + i / 8);
}
```
